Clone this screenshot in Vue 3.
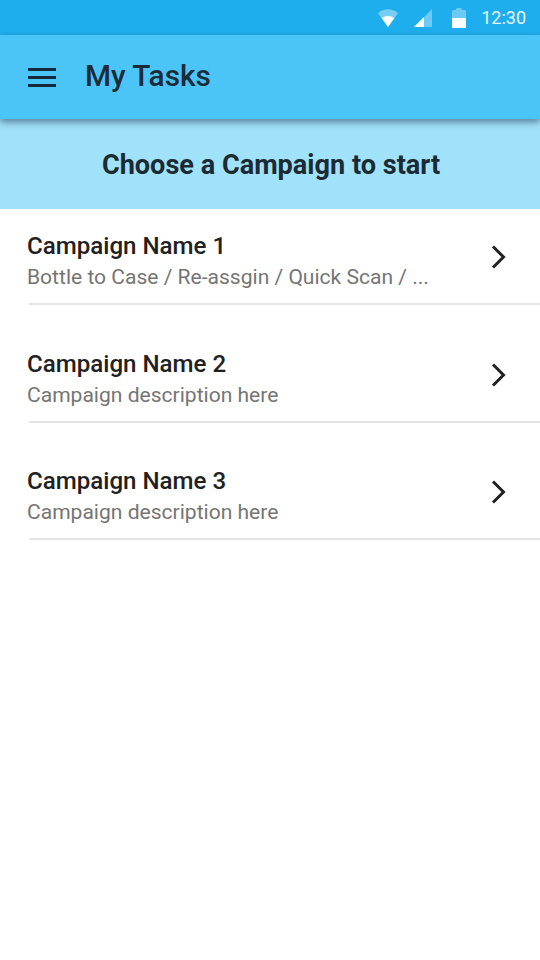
<script setup>
const campaigns = [
  { name: 'Campaign Name 1', desc: 'Bottle to Case / Re-assgin / Quick Scan / ...' },
  { name: 'Campaign Name 2', desc: 'Campaign description here' },
  { name: 'Campaign Name 3', desc: 'Campaign description here' },
]
</script>

<template>
  <div class="screen">
    <div class="status">
      <svg class="wifi" width="20" height="18" viewBox="0 0 20 18">
        <path d="M0 4.2C5.6-1.2 14.4-1.2 20 4.2L10 18Z" fill="#fff" fill-opacity=".4" />
        <path d="M3.7 9.1C7.4 6.4 12.6 6.4 16.3 9.1L10 18Z" fill="#fff" />
      </svg>
      <svg class="signal" width="18" height="18" viewBox="0 0 18 18">
        <path d="M18 0V18H0Z" fill="#fff" fill-opacity=".35" />
        <path d="M10 8V18H0Z" fill="#fff" />
      </svg>
      <svg class="battery" width="14" height="20" viewBox="0 0 14 20">
        <path d="M4 1.5Q4 0 5.5 0H8.5Q10 0 10 1.5V2H12.5Q14 2 14 3.5V20H0V3.5Q0 2 1.5 2H4Z" fill="#fff" fill-opacity=".35" />
        <rect y="10" width="14" height="10" fill="#fff" />
      </svg>
      <span class="time">12:30</span>
    </div>
    <header class="appbar">
      <div class="menu"><i></i><i></i><i></i></div>
      <h1>My Tasks</h1>
    </header>
    <div class="banner">Choose a Campaign to start</div>
    <ul class="list">
      <li v-for="c in campaigns" :key="c.name" class="row">
        <div class="texts">
          <div class="name">{{ c.name }}</div>
          <div class="desc">{{ c.desc }}</div>
        </div>
        <svg class="chev" width="16" height="24" viewBox="0 0 16 24">
          <path d="M2 1.5L12.5 12L2 22.5" fill="none" stroke="#212121" stroke-width="3" />
        </svg>
      </li>
    </ul>
  </div>
</template>

<style>
html, body { margin: 0; background: #fff; }
</style>

<style scoped>
.screen {
  width: 540px;
  height: 960px;
  overflow: hidden;
  background: #fff;
  font-family: Roboto, "Liberation Sans", sans-serif;
  display: flex;
  flex-direction: column;
}
.status {
  height: 35px;
  flex: none;
  background: #1eaeee;
  display: flex;
  align-items: center;
  justify-content: flex-end;
  padding-right: 14px;
  box-sizing: border-box;
}
.wifi { margin-right: 16px; margin-top: 1px; }
.signal { margin-right: 20px; margin-top: 1px; }
.battery { margin-right: 15px; }
.time { font-size: 18px; color: #e6f6fe; }
.appbar {
  height: 84px;
  flex: none;
  background: #4bc4f7;
  display: flex;
  align-items: center;
  padding-left: 28px;
  box-shadow: 0 3px 7px rgba(40, 60, 80, .6);
  position: relative;
  z-index: 1;
}
.menu {
  width: 28px;
  display: flex;
  flex-direction: column;
  gap: 5px;
  margin-right: 29px;
}
.menu i { display: block; height: 3px; background: #14293a; }
h1 {
  margin: 0 0 3px;
  font-size: 29.8px;
  font-weight: 500;
  color: #1b2b38;
}
.banner {
  height: 90px;
  padding: 2px 0 0 2px;
  box-sizing: border-box;
  flex: none;
  background: #a0e2fa;
  display: flex;
  align-items: center;
  justify-content: center;
  font-size: 27.1px;
  font-weight: 700;
  color: #1c2a33;
}
.list { list-style: none; margin: 0; padding: 0; }
.row {
  box-sizing: border-box;
  margin-left: 29px;
  padding: 42.5px 33px 11px 0;
  border-bottom: 2px solid #e4e4e4;
  display: flex;
  align-items: center;
  justify-content: space-between;
}
.row:first-child { padding-top: 21px; }
.texts { margin-left: -2px; }
.name { font-size: 24.1px; font-weight: 500; color: #212121; line-height: 32px; }
.desc { font-size: 21.05px; color: #757575; line-height: 30px; }
.chev { margin-bottom: 8px; }
</style>
